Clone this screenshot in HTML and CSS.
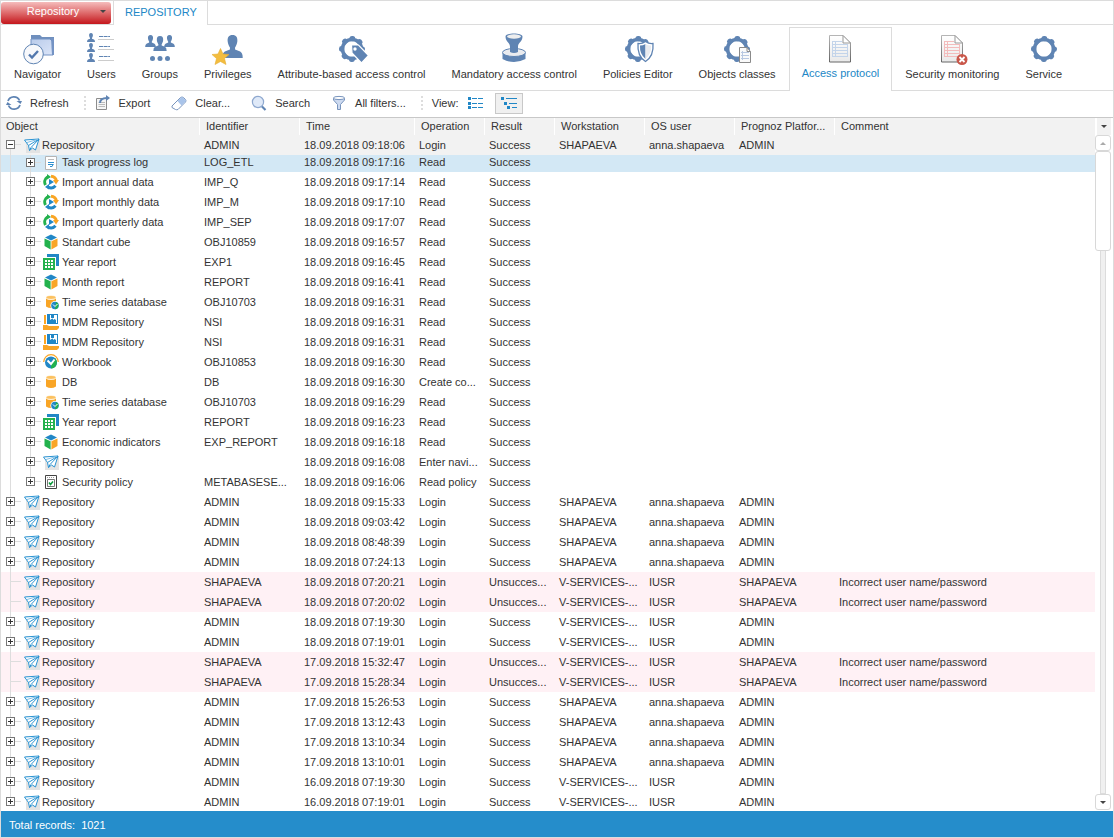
FILE: index.html
```html
<!DOCTYPE html>
<html lang="en">
<head>
  <meta charset="UTF-8">
  <meta name="viewport" content="width=device-width, initial-scale=1.0">
  <title>Access protocol</title>
  <link rel="stylesheet" href="styles.css">
</head>
<body>
  <!-- shared shapes -->
  <svg class="sprite" aria-hidden="true">
    <defs>
      <linearGradient id="paper" x1="0" y1="0" x2="0" y2="1">
        <stop offset="0" stop-color="#fff"/><stop offset="1" stop-color="#e9e9e9"/>
      </linearGradient>
      <linearGradient id="edge" x1="0" y1="0" x2="0" y2="1">
        <stop offset="0" stop-color="#b5b5b5"/><stop offset="1" stop-color="#666"/>
      </linearGradient>
      <linearGradient id="folder" x1="0" y1="0" x2="1" y2="1">
        <stop offset="0" stop-color="#b9cbea"/><stop offset="1" stop-color="#dbe5f8"/>
      </linearGradient>
    </defs>
    <symbol id="gear" viewBox="0 0 32 32">
      <circle cx="16" cy="16" r="9.500" fill="none" stroke="#5f84b3" stroke-width="3.600"/>
      <circle cx="16" cy="16" r="10.400" fill="none" stroke="#5f84b3" stroke-width="5.200" stroke-linecap="round" stroke-dasharray=".6 7.568" stroke-dashoffset=".3"/>
    </symbol>
    <symbol id="man" viewBox="0 0 8 9">
      <path fill="#5f84b3" d="M4 0C5.500 0 6 1 5.900 2.400C5.800 3.600 5.300 4.400 5 4.900L5 5.700L7 6.500Q8 7 8 9H0Q0 7 1 6.500L3 5.700V4.900C2.700 4.400 2.200 3.600 2.100 2.400C2 1 2.500 0 4 0Z"/>
    </symbol>
    <symbol id="sheet" viewBox="0 0 22 28">
      <path d="M.5.5H14L21.500 8V27H.5Z" fill="url(#paper)" stroke="url(#edge)"/>
      <path d="M14 .5V8H21.500Z" fill="#fff" stroke="#999"/>
      <path d="M3 6.500H13M3 9.500H19M3 12.500H19M3 15.500H19M3 18.500H19M3 21.500H19M3.500 6V22M6.500 6V22M18.500 9V22" fill="none" stroke="currentColor"/>
    </symbol>

    <symbol id="i-plane" viewBox="0 0 16 16">
      <path d="M2 2H16V16H2Z" fill="#e3e3e3"/>
      <path d="M.5 3L15 2L11.500 13L8.500 11L5.500 13.500L4.500 8.500Z" fill="#fff" stroke="#2a93d2" stroke-linejoin="round"/>
      <path d="M15 2L4.500 8.500M15 2L7 10.500L5.500 13.500" fill="none" stroke="#2a93d2"/>
      <path d="M3 5.500L14 2.300" stroke="#7fbfe6"/>
    </symbol>
    <symbol id="i-log" viewBox="0 0 16 16">
      <path d="M2.500 1.500H13.500V14.500H2.500Z" fill="#fff" stroke="#b4b4b4"/>
      <path d="M5 4.500H11" stroke="#bbb"/>
      <path d="M5 7.500H11M5 9.500H9M7 11.500H9" stroke="#2a8fd0"/><path d="M9 9H11L9 12Z" fill="#2a8fd0"/>
    </symbol>
    <symbol id="i-import" viewBox="0 0 16 16">
      <path d="M2.500 11A6 6 0 0 1 4.500 3" fill="none" stroke="#23b14d" stroke-width="3"/>
      <path d="M8 2.300A6 6 0 0 1 13.500 7" fill="none" stroke="#f9a526" stroke-width="3"/>
      <path d="M10 6H16L13 10.500Z" fill="#f9a526"/>
      <path d="M12.500 11.800A6 6 0 0 1 5 13" fill="none" stroke="#2187c6" stroke-width="3"/>
      <path d="M2 13L6 10V15.500Z" fill="#2187c6"/><path d="M4 0L8 3L4 5.500Z" fill="#23b14d"/>
      <path d="M6 5L11 8L6 11Z" fill="#2187c6"/>
    </symbol>
    <symbol id="i-cube" viewBox="0 0 16 16">
      <path d="M8 .5L14 3.500L8 6.500L2 3.500Z" fill="#2187c6"/>
      <path d="M1.500 4.500L7.600 7.200V15.500L1.500 12Z" fill="#23b14d"/>
      <path d="M14.500 4.500L8.400 7.200V15.500L14.500 12Z" fill="#f9a526"/>
    </symbol>
    <symbol id="i-report" viewBox="0 0 16 16">
      <path d="M4 0H16V12H13V3H4Z" fill="#2187c6"/>
      <path d="M0 4H12V16H0Z" fill="#23b14d"/>
      <path d="M2 6H10V14H2Z" fill="#fff"/>
      <path d="M2 8.500H10M2 11.500H10M4.500 6V14M7.500 6V14" stroke="#23b14d"/>
    </symbol>
    <symbol id="i-db" viewBox="0 0 16 16">
      <path d="M3 4.500Q8 7.500 13 4.500V12.500Q8 15.500 3 12.500Z" fill="#f9a526"/>
      <ellipse cx="8" cy="3.400" rx="5" ry="2" fill="#fbc160" stroke="#fff" stroke-width=".6"/>
    </symbol>
    <symbol id="i-tsdb" viewBox="0 0 16 16">
      <path d="M3 4.500Q8 7.500 13 4.500V12.500Q8 15.500 3 12.500Z" fill="#f9a526"/>
      <ellipse cx="8" cy="3.400" rx="5" ry="2" fill="#fbc160" stroke="#fff" stroke-width=".6"/>
      <circle cx="12" cy="11.500" r="4.500" fill="#fff"/><circle cx="12" cy="11.500" r="3.800" fill="#2187c6"/>
      <path d="M13 8A3.800 3.800 0 0 1 12 15.300Z" fill="#23b14d"/>
      <path d="M10 10.500L12 12.500L14.500 10" fill="none" stroke="#fff"/>
    </symbol>
    <symbol id="i-mdm" viewBox="0 0 16 16">
      <path d="M1 1H3V10H1ZM0 11H4L6 12H16V14L14 16H0Z" fill="#f9a526"/>
      <path d="M4 0H15V10H4Z" fill="#2187c6"/>
      <path d="M7 1H13V6L11.500 5L10 6V4.500L8.500 5L7 6Z" fill="#fff"/><path d="M8 0H11V4H8Z" fill="#2187c6"/>
      <path d="M13.500 1V9" stroke="#fff"/>
    </symbol>
    <symbol id="i-workbook" viewBox="0 0 16 16">
      <path d="M.7 8A7.300 7.300 0 0 1 15.300 8" fill="none" stroke="#f9a526" stroke-width="1.200"/>
      <circle cx="8" cy="8.500" r="6" fill="#2187c6"/>
      <path d="M12 4.200A6 6 0 0 1 8 14.500L8 9Z" fill="#23b14d"/>
      <path d="M4.500 6.500L8 10L11.500 5.500" fill="none" stroke="#fff" stroke-width="2"/>
    </symbol>
    <symbol id="i-policy" viewBox="0 0 16 16">
      <path d="M2.500 1.500H13.500V14.500H2.500Z" fill="#fff" stroke="#444"/>
      <path d="M4 3.500H12" stroke="#999" stroke-dasharray="1 1"/>
      <path d="M4.500 5.500H11.500V12.500H4.500Z" fill="#fff" stroke="#777"/>
      <path d="M6 8.500L7.500 10.500L10 7.500" fill="none" stroke="#0c9a3c" stroke-width="1.500"/>
    </symbol>
  </svg>

  <div class="window">
    <header class="tabs">
      <button class="main-menu" type="button"><span>Repository</span><i class="arrow"></i></button>
      <a class="tab" href="#">REPOSITORY</a>
    </header>

    <nav class="ribbon">
      <a class="item" href="#">
        <svg width="32" height="32" viewBox="0 0 32 32">
          <path d="M9 2H18L20 4H32V8H9Z" fill="#6f8fbd"/>
          <path d="M9 6H28L31 9V22H9Z" fill="url(#folder)" stroke="#7493c4"/>
          <path d="M29 5H32V22H30Z" fill="#7493c4"/>
          <circle cx="11.500" cy="21" r="9.800" fill="#f7f8fb" stroke="#5f84b3"/>
          <path d="M7 21.500L10 24.500L16 18" fill="none" stroke="#5277ad" stroke-width="2.400"/>
        </svg>
        <span>Navigator</span>
      </a>
      <a class="item" href="#">
        <svg width="32" height="32" viewBox="0 0 32 32">
          <use href="#man" x="2" width="8" height="9"/><use href="#man" x="2" y="10" width="8" height="9"/><use href="#man" x="2" y="20" width="8" height="9"/>
          <path d="M14 3.500H25M14 13.500H25M14 23.500H25" stroke="#5f84b3" stroke-width="1.200" stroke-dasharray="4 .6"/>
          <path d="M13 6.500H29M13 16.500H29M13 27.500H29" stroke="#ccc"/>
        </svg>
        <span>Users</span>
      </a>
      <a class="item" href="#">
        <svg width="32" height="32" viewBox="0 0 32 32">
          <use href="#man" x="1" y="2" width="11" height="12"/><use href="#man" x="20" y="2" width="11" height="12"/>
          <use href="#man" x="8.500" y="3" width="15" height="15"/>
          <g fill="#5f84b3"><circle cx="8.500" cy="25.500" r="2.500"/><circle cx="16" cy="25.500" r="2.500"/><circle cx="23.500" cy="25.500" r="2.500"/></g>
        </svg>
        <span>Groups</span>
      </a>
      <a class="item" href="#">
        <svg width="32" height="32" viewBox="0 0 32 32">
          <use href="#man" x="10" y="2" width="21" height="23"/>
          <path d="M8.500 15.500L11 21L17 21.500L12.500 25.500L14 31.500L8.500 28.500L3 31.500L4.500 25.500L0 21.500L6 21Z" fill="#f3bd3f" stroke="#e5ac33" stroke-width=".6"/>
        </svg>
        <span>Privileges</span>
      </a>
      <a class="item" href="#">
        <svg width="32" height="32" viewBox="0 0 32 32">
          <use href="#gear"/>
          <path d="M15.500 12H22.500L32.500 22.500L25.500 30L16 20Z" fill="#5f84b3" stroke="#fff" stroke-width="1.200"/>
          <circle cx="19" cy="16" r="1.700" fill="#fff"/>
        </svg>
        <span>Attribute-based access control</span>
      </a>
      <a class="item" href="#">
        <svg width="32" height="32" viewBox="0 0 32 32">
          <path d="M4.500 20V26Q16 32 27.500 26V20Z" fill="#5f84b3"/>
          <ellipse cx="16" cy="19.500" rx="11.500" ry="4" fill="#e9ebef" stroke="#5f84b3"/>
          <path d="M7.500 3.500C7.500 -.5 24.500 -.5 24.500 3.500C24.500 9 20 9 20 14V19Q16 21 12 19V14C12 9 7.500 9 7.500 3.500Z" fill="#5f84b3"/>
          <ellipse cx="16" cy="3.500" rx="7" ry="2.200" fill="#eee"/>
        </svg>
        <span>Mandatory access control</span>
      </a>
      <a class="item" href="#">
        <svg width="32" height="32" viewBox="0 0 32 32">
          <use href="#gear"/>
          <path d="M16 10.500Q20 11 23.500 8.500Q27 11 31 10.500Q32 23 23.500 28.500Q15 23 16 10.500Z" fill="#fff" stroke="#5f84b3" stroke-width="1.300"/>
          <path d="M18 12.500Q21 12.500 23.500 11V26Q17.500 21 18 12.500Z" fill="#5f84b3"/>
          <path d="M23.500 11Q26 12.500 29 12.500Q29.500 21 23.500 26Z" fill="#e9ebef"/>
        </svg>
        <span>Policies Editor</span>
      </a>
      <a class="item" href="#">
        <svg width="32" height="32" viewBox="0 0 32 32">
          <use href="#gear"/>
          <path d="M18.500 14.500H26L29.500 18.500V29.500H18.500Z" fill="#fafafa" stroke="#8a8a8a"/>
          <path d="M26 14.500V18.500H29.500" fill="none" stroke="#8a8a8a"/>
          <path d="M20 19.500H28M20 22.500H28M20 25.500H28M21.500 18V27" stroke="#b9c9e2"/>
        </svg>
        <span>Objects classes</span>
      </a>
      <a class="item active" href="#">
        <svg width="32" height="32" viewBox="0 0 32 32"><use href="#sheet" class="blue-lines" x="5" y="2" width="22" height="28"/></svg>
        <span>Access protocol</span>
      </a>
      <a class="item" href="#">
        <svg width="32" height="32" viewBox="0 0 32 32">
          <use href="#sheet" class="red-lines" x="5" y="2" width="22" height="28"/>
          <circle cx="26" cy="26.500" r="5.500" fill="#c9574a"/>
          <path d="M23.500 24L28.500 29M28.500 24L23.500 29" stroke="#fff" stroke-width="1.800"/>
        </svg>
        <span>Security monitoring</span>
      </a>
      <a class="item" href="#">
        <svg width="32" height="32" viewBox="0 0 32 32"><use href="#gear"/></svg>
        <span>Service</span>
      </a>
    </nav>

    <div class="toolbar">
      <button type="button">
        <svg width="16" height="16" viewBox="0 0 16 16">
          <path d="M2 6A6.200 6.200 0 0 1 13.500 5.500M14 10A6.200 6.200 0 0 1 2.500 10.500" fill="none" stroke="#5f84b3" stroke-width="1.800"/>
          <path d="M10.500 6H16L14.500 9ZM5.500 10H0L1.500 7Z" fill="#5f84b3"/>
        </svg>Refresh
      </button>
      <i class="separator"></i>
      <button type="button">
        <svg width="16" height="16" viewBox="0 0 16 16">
          <path d="M1.500 3.500H11.500V14.500H1.500Z" fill="#f6f6f6" stroke="#8c8c8c"/>
          <path d="M3.500 7.500H10M3.500 9.500H10M3.500 11.500H10" stroke="#bbb"/>
          <path d="M5 8Q5 3 12 3" fill="none" stroke="#5f84b3" stroke-width="2"/><path d="M11 0L15 3L11 6Z" fill="#5f84b3"/>
        </svg>Export
      </button>
      <button type="button">
        <svg width="16" height="16" viewBox="0 0 16 16">
          <path d="M1 11L9.500 2.500Q11 1.500 12.500 2.500L14.500 4.500Q15.500 6 14.500 7L7 14.500Q5.500 15 4.500 14.500L1 12.500Z" fill="#fff" stroke="#7894bd"/>
          <path d="M6.500 6L10 2.500Q11 2 12 2.500L14.500 5Q15 6 14.500 6.500L10.500 10.500Z" fill="#a9c4ea"/>
        </svg>Clear...
      </button>
      <button type="button">
        <svg width="16" height="16" viewBox="0 0 16 16">
          <path d="M10.500 11L14.500 15" stroke="#5f84b3" stroke-width="2.200"/>
          <circle cx="7" cy="7" r="5.600" fill="#dfe9f8" stroke="#8ea8cf" stroke-width="1.200"/>
        </svg>Search
      </button>
      <button type="button">
        <svg width="16" height="16" viewBox="0 0 16 16">
          <path d="M2.500 3V5L6.500 9.500V14.500H9.500V9.500L13.500 5V3Z" fill="#cddaf0" stroke="#7894bd"/>
          <ellipse cx="8" cy="3" rx="5.500" ry="1.600" fill="#fff" stroke="#7894bd"/>
        </svg>All filters...
      </button>
      <i class="separator"></i>
      <span class="view-label">View:</span>
      <button class="view" type="button" aria-label="List">
        <svg width="16" height="12" viewBox="0 0 16 12">
          <path d="M0 0H3V3H0ZM0 5H3V8H0ZM0 9H3V12H0Z" fill="#2187c6"/>
          <path d="M4 1.500H9M10 1.500H15M4 6.500H9M10 6.500H15M4 10.500H9M10 10.500H15" stroke="#2187c6"/>
        </svg>
      </button>
      <button class="view pressed" type="button" aria-label="Tree">
        <svg width="16" height="12" viewBox="0 0 16 12">
          <path d="M0 0H3V3H0ZM3 5H6V8H3ZM6 9H9V12H6Z" fill="#2187c6"/>
          <path d="M5 1.500H16M8 6.500H16M11 10.500H16" stroke="#2187c6"/>
        </svg>
      </button>
    </div>

    <main class="grid">
      <div class="grid-body">
        <table>
          <colgroup>
            <col class="w198"><col class="w100"><col class="w115"><col class="w70"><col class="w70">
            <col class="w90"><col class="w90"><col class="w100"><col>
          </colgroup>
          <thead>
            <tr>
              <th>Object</th><th>Identifier</th><th>Time</th><th>Operation</th><th>Result</th>
              <th>Workstation</th><th>OS user</th><th>Prognoz Platfor...</th><th>Comment</th>
            </tr>
          </thead>
          <tbody id="records"></tbody>
        </table>
      </div>
      <div class="scroll">
        <button class="columns-menu" type="button" aria-label="Columns"><i class="arrow"></i></button>
        <button class="step" type="button" aria-label="Up"><i class="arrow up"></i></button>
        <div class="track"><div class="thumb"></div></div>
        <button class="step" type="button" aria-label="Down"><i class="arrow"></i></button>
      </div>
    </main>

    <footer class="status">Total records:&nbsp; 1021</footer>
  </div>
  <script src="script.js"></script>
</body>
</html>
```
FILE: styles.css
```css
* {
  box-sizing: border-box;
}

body {
  margin: 0;
  font-family: "Liberation Sans", Arial, sans-serif;
  font-size: 11px;
  color: #333;
  background: #fff;
}

button {
  font: inherit;
  color: inherit;
  padding: 0;
  border: 0;
  background: none;
}

a {
  color: inherit;
  text-decoration: none;
}

/* kept rendered, otherwise the gradients are lost */
.sprite {
  position: absolute;
  width: 0;
  height: 0;
}

.window {
  display: flex;
  flex-direction: column;
  height: 100vh;
  border: 1px solid #dcdcdc;
}

.arrow {
  border: 3px solid transparent;
  border-top-color: #444;
  border-bottom: 0;
}

.arrow.up {
  border-top: 0;
  border-bottom: 3px solid #aaa;
}

/* top tabs */
.tabs {
  display: flex;
  height: 24px;
  flex: none;
  gap: 2px;
  border-bottom: 1px solid #dcdcdc;
}

.main-menu {
  display: flex;
  align-items: center;
  width: 110px;
  height: 22px;
  margin-top: 1px;
  padding: 0 5px 4px;
  border-radius: 3px;
  color: #fff;
  background: linear-gradient(#f5bcbc, #de6a6b 50%, #c4161c);
}

.main-menu span {
  flex: 1;
}

.tab {
  height: 24px;
  padding: 0 10px 0 11px;
  line-height: 22px;
  color: #2187c6;
  background: #fff;
  border: 1px solid #dcdcdc;
  border-width: 0 1px;
}

/* ribbon */
.ribbon {
  display: flex;
  flex: none;
  height: 66px;
  border-bottom: 1px solid #dcdcdc;
}

.item {
  display: flex;
  flex-direction: column;
  align-items: center;
  gap: 1px;
  padding: 8px 13px 0;
  line-height: 16px;
  white-space: nowrap;
}

.item svg {
  margin: 0 -2px;
  overflow: visible;
}

.item.active {
  height: 64px;
  margin-top: 2px;
  padding: 5px 12px 0;
  gap: 0;
  color: #2187c6;
  background: #fff;
  border: 1px solid #dcdcdc;
  border-bottom: 0;
}

.blue-lines {
  color: #c3d4ea;
}

.red-lines {
  color: #f3bcbc;
}

/* toolbar */
.toolbar {
  display: flex;
  flex: none;
  align-items: center;
  height: 27px;
  padding: 0 5px 2px;
  border-bottom: 1px solid #c8c8c8;
}

.toolbar button {
  display: flex;
  align-items: center;
  gap: 8px;
  margin-right: 21px;
}

.toolbar .separator {
  width: 2px;
  height: 14px;
  margin: 0 9px 0 -6px;
  background: repeating-linear-gradient(#ddd 0 2px, transparent 2px 4px);
}

.view-label {
  margin-right: 4px;
}

.toolbar .view {
  justify-content: center;
  width: 28px;
  height: 21px;
  margin-right: 5px;
}

.toolbar .pressed {
  background: #f0f0f0;
  border: 1px solid #c8c8c8;
}

/* records grid */
.grid {
  display: flex;
  flex: 1;
  min-height: 0;
}

.grid-body {
  flex: 1;
  min-width: 0;
  overflow: hidden;
}

table {
  width: 100%;
  table-layout: fixed;
  border-collapse: separate;
  border-spacing: 0;
}

.w70 { width: 70px; }
.w90 { width: 90px; }
.w100 { width: 100px; }
.w115 { width: 115px; }
.w198 { width: 198px; }

th,
td {
  height: 20px;
  padding: 0 0 0 5px;
  line-height: 20px;
  text-align: left;
  vertical-align: top;
  font-weight: normal;
  white-space: nowrap;
  overflow: hidden;
}

th {
  height: 17px;
  line-height: 17px;
  padding-left: 6px;
  background: #f2f2f2;
  border-left: 1px solid #fff;
}

th:first-child {
  padding-left: 5px;
  border-left: 0;
}

td:first-child {
  padding: 0;
}

.open td {
  background: #f2f2f2;
}

.selected td {
  height: 17px;
  line-height: 15px;
  background: #d3e8f5;
}

.failed td {
  background: #fff1f5;
}

/* tree column */
.tree {
  display: flex;
  align-items: center;
  height: 20px;
}

.selected .tree {
  height: 17px;
  padding-bottom: 2px;
}

.indent,
.branch {
  display: flex;
  align-items: center;
  flex: none;
  width: 20px;
  height: 20px;
  padding: 0 0 1px 5px;
  background: linear-gradient(#ddd, #ddd) 9px 0 / 1px 100% no-repeat;
}

.branch {
  background: linear-gradient(#ddd, #ddd) 9px 0 / 1px 100% no-repeat,
    linear-gradient(#ddd, #ddd) 9px 9px / 11px 1px no-repeat;
}

.open .branch {
  background-position: 9px 10px, 9px 9px;
}

.last .branch {
  background-size: 1px 10px, 11px 1px;
}

.expander {
  width: 9px;
  height: 9px;
  border: 1px solid #777;
  background: linear-gradient(#333, #333) 50% 50% / 5px 1px no-repeat,
    linear-gradient(#333, #333) 50% 50% / 1px 5px no-repeat, #fff;
}

.open .expander {
  background: linear-gradient(#333, #333) 50% 50% / 5px 1px no-repeat, #fff;
}

.tree svg {
  flex: none;
  width: 16px;
  height: 16px;
  margin: 0 2px 0 3px;
}

.indent ~ svg {
  margin: 0 3px 0 2px;
}

/* scrollbar */
.scroll {
  display: flex;
  flex-direction: column;
  align-items: center;
  width: 18px;
  padding: 0 2px 1px 0;
}

.columns-menu {
  display: flex;
  align-items: center;
  justify-content: center;
  width: 14px;
  height: 17px;
  margin-left: 2px;
  background: #f2f2f2;
}

.step {
  display: flex;
  flex: none;
  align-items: center;
  justify-content: center;
  width: 16px;
  height: 16px;
  border: 1px solid #d8d8d8;
  border-radius: 3px;
  background: #fff;
}

.track {
  flex: 1;
  width: 6px;
  background: #f0f0f0;
  border: 1px solid #dcdcdc;
}

.thumb {
  width: 16px;
  height: 100px;
  margin: -1px 0 0 -6px;
  background: #fff;
  border: 1px solid #d8d8d8;
  border-radius: 3px;
}

/* status bar */
.status {
  flex: none;
  height: 26px;
  padding: 0 8px;
  line-height: 28px;
  color: #fff;
  background: #258dcb;
}
```
FILE: script.js
```js
// icon, object, identifier, time, operation
const session = [
  ['log', 'Task progress log', 'LOG_ETL', '09:17:16', 'Read'],
  ['import', 'Import annual data', 'IMP_Q', '09:17:14', 'Read'],
  ['import', 'Import monthly data', 'IMP_M', '09:17:10', 'Read'],
  ['import', 'Import quarterly data', 'IMP_SEP', '09:17:07', 'Read'],
  ['cube', 'Standart cube', 'OBJ10859', '09:16:57', 'Read'],
  ['report', 'Year report', 'EXP1', '09:16:45', 'Read'],
  ['cube', 'Month report', 'REPORT', '09:16:41', 'Read'],
  ['tsdb', 'Time series database', 'OBJ10703', '09:16:31', 'Read'],
  ['mdm', 'MDM Repository', 'NSI', '09:16:31', 'Read'],
  ['mdm', 'MDM Repository', 'NSI', '09:16:31', 'Read'],
  ['workbook', 'Workbook', 'OBJ10853', '09:16:30', 'Read'],
  ['db', 'DB', 'DB', '09:16:30', 'Create co...'],
  ['tsdb', 'Time series database', 'OBJ10703', '09:16:29', 'Read'],
  ['report', 'Year report', 'REPORT', '09:16:23', 'Read'],
  ['cube', 'Economic indicators', 'EXP_REPORT', '09:16:18', 'Read'],
  ['plane', 'Repository', '', '09:16:08', 'Enter navi...'],
  ['policy', 'Security policy', 'METABASESE...', '09:16:06', 'Read policy']
];

const local = ['SHAPAEVA', 'anna.shapaeva', 'ADMIN'];
const server = ['V-SERVICES-...', 'IUSR', 'ADMIN'];

// time, workstation data; no workstation data means a failed login
const logins = [
  ['18.09.2018 09:15:33', local],
  ['18.09.2018 09:03:42', local],
  ['18.09.2018 08:48:39', local],
  ['18.09.2018 07:24:13', local],
  ['18.09.2018 07:20:21'],
  ['18.09.2018 07:20:02'],
  ['18.09.2018 07:19:30', server],
  ['18.09.2018 07:19:01', server],
  ['17.09.2018 15:32:47'],
  ['17.09.2018 15:28:34'],
  ['17.09.2018 15:26:53', local],
  ['17.09.2018 13:12:43', local],
  ['17.09.2018 13:10:34', local],
  ['17.09.2018 13:10:01', local],
  ['16.09.2018 07:19:30', server],
  ['16.09.2018 07:19:01', server]
];

function addRow(className, icon, cells, child) {
  const failed = className === 'failed';
  const row = document.createElement('tr');
  row.className = className;
  row.innerHTML = `<td><div class="tree">${child ? '<span class="indent"></span>' : ''}` +
    `<span class="branch">${failed ? '' : '<button class="expander" type="button" aria-label="Toggle"></button>'}</span>` +
    `<svg viewBox="0 0 16 16"><use href="#i-${icon}"/></svg>${cells[0]}</div></td>` +
    cells.slice(1).map(text => `<td>${text}</td>`).join('');
  document.getElementById('records').appendChild(row);
}

addRow('open', 'plane', ['Repository', 'ADMIN', '18.09.2018 09:18:06', 'Login', 'Success', ...local, '']);

session.forEach(([icon, name, id, time, operation], i) => {
  const className = i === 0 ? 'selected' : i === session.length - 1 ? 'last' : '';
  addRow(className, icon, [name, id, '18.09.2018 ' + time, operation, 'Success', '', '', '', ''], true);
});

logins.forEach(([time, from], i) => {
  if (from) {
    addRow(i === logins.length - 1 ? 'last' : '', 'plane',
      ['Repository', 'ADMIN', time, 'Login', 'Success', ...from, '']);
  } else {
    addRow('failed', 'plane', ['Repository', 'SHAPAEVA', time, 'Login', 'Unsucces...',
      'V-SERVICES-...', 'IUSR', 'SHAPAEVA', 'Incorrect user name/password']);
  }
});
```
